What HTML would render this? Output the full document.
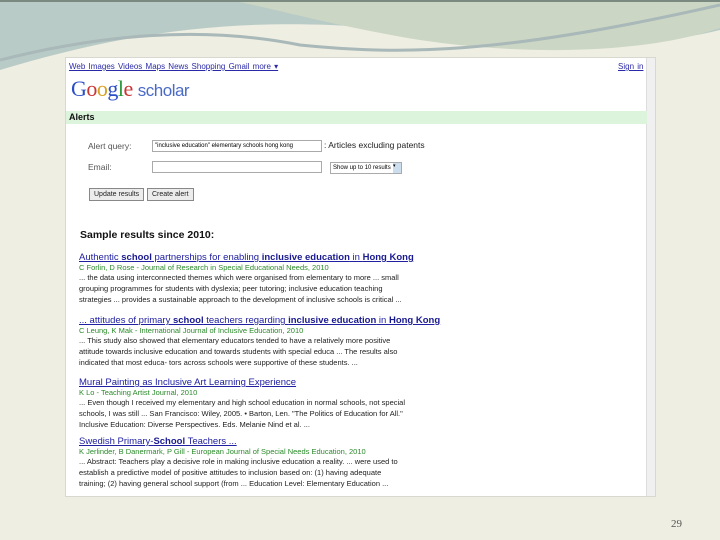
<!DOCTYPE html>
<html><head><meta charset="utf-8"><style>
*{margin:0;padding:0;box-sizing:border-box}
body{width:720px;height:540px;overflow:hidden;background:#eeeee2;font-family:"Liberation Sans",sans-serif;position:relative}
.shot{position:absolute;left:65px;top:57px;width:591px;height:440px;background:#fff;border:1px solid #d8d8d0}
.sb{position:absolute;right:0;top:0;width:9px;height:100%;background:#f0f0f0;border-left:1px solid #ddd}
.a{position:absolute;white-space:nowrap}
.nav{top:4px;left:3px;font-size:8px;color:#2a2aa8;text-decoration:underline;word-spacing:1px}
.t{font-size:9.5px;color:#2020a0;text-decoration:underline}
.t b{color:#1a1a90}
.g{font-size:7.5px;color:#2a8a2a}
.s{font-size:7.5px;color:#222;line-height:11px}
.inp{position:absolute;border:1px solid #aaa;background:#fff;height:12px}
.btn{position:absolute;border:1px solid #888;background:#ececec;font-size:7px;height:13px;padding:2px 4px;color:#222}
</style></head><body>
<svg style="position:absolute;left:0;top:0" width="720" height="70">
<path d="M0 0H720V70H0Z" fill="#eeeee2"/>
<path d="M0 0H720V30C600 60 450 30 330 25 200 20 100 40 0 70Z" fill="#b9cbc6"/>
<path d="M230 0H720V28C640 55 520 55 420 40 330 25 280 10 230 0Z" fill="#ccd6c4"/>
<path d="M0 60C100 35 200 25 300 45 400 55 500 55 720 5" stroke="#a9b8b8" stroke-width="3" fill="none"/>
<path d="M0 0H720V2H0Z" fill="#7a8a80"/>
</svg>
<div class="shot">
<div class="sb"></div>
<div class="a nav">Web Images Videos Maps News Shopping Gmail more ▾</div>
<div class="a nav" style="left:552px">Sign in</div>
<div class="a" style="left:5px;top:18px;font-size:22px;font-family:'Liberation Serif',serif;letter-spacing:-0.5px"><span style="color:#2b4fc8">G</span><span style="color:#c33">o</span><span style="color:#d8a020">o</span><span style="color:#2b4fc8">g</span><span style="color:#2a9a3a">l</span><span style="color:#c33">e</span> <span style="font-family:'Liberation Sans',sans-serif;color:#4a6ac8;font-size:17px">scholar</span></div>
<div class="a" style="left:0;top:53px;width:581px;height:13px;background:#dcf3dc;font-size:9px;font-weight:bold;padding:1px 3px;color:#111">Alerts</div>
<div class="a" style="left:22px;top:83px;font-size:8.5px;color:#555">Alert query:</div>
<div class="inp" style="left:86px;top:82px;width:170px;font-size:6px;padding:2px">"inclusive education" elementary schools hong kong</div>
<div class="a" style="left:258px;top:82px;font-size:8.5px;color:#222">: Articles excluding patents</div>
<div class="a" style="left:22px;top:104px;font-size:8.5px;color:#555">Email:</div>
<div class="inp" style="left:86px;top:103px;width:170px"></div>
<div class="inp" style="left:264px;top:104px;width:72px;font-size:6px;padding:2px">Show up to 10 results<span style="position:absolute;right:0;top:0;width:8px;height:10px;background:#cde;font-size:5px">▾</span></div>
<div class="btn" style="left:23px;top:130px">Update results</div>
<div class="btn" style="left:81px;top:130px">Create alert</div>
<div class="a" style="left:14px;top:171px;font-size:10.5px;font-weight:bold;color:#111">Sample results since 2010:</div>
<div class="a" style="left:13px;top:194px"><div class="t">Authentic <b>school</b> partnerships for enabling <b>inclusive education</b> in <b>Hong Kong</b></div>
<div class="g">C Forlin, D Rose - Journal of Research in Special Educational Needs, 2010</div>
<div class="s">... the data using interconnected themes which were organised from elementary to more ... small<br>grouping programmes for students with dyslexia; peer tutoring; inclusive education teaching<br>strategies ... provides a sustainable approach to the development of inclusive schools is critical ...</div></div>
<div class="a" style="left:13px;top:257px"><div class="t">... attitudes of primary <b>school</b> teachers regarding <b>inclusive education</b> in <b>Hong Kong</b></div>
<div class="g">C Leung, K Mak - International Journal of Inclusive Education, 2010</div>
<div class="s">... This study also showed that elementary educators tended to have a relatively more positive<br>attitude towards inclusive education and towards students with special educa ... The results also<br>indicated that most educa- tors across schools were supportive of these students. ...</div></div>
<div class="a" style="left:13px;top:319px"><div class="t">Mural Painting as Inclusive Art Learning Experience</div>
<div class="g">K Lo - Teaching Artist Journal, 2010</div>
<div class="s">... Even though I received my elementary and high school education in normal schools, not special<br>schools, I was still ... San Francisco: Wiley, 2005. • Barton, Len. "The Politics of Education for All."<br>Inclusive Education: Diverse Perspectives. Eds. Melanie Nind et al. ...</div></div>
<div class="a" style="left:13px;top:378px"><div class="t">Swedish Primary-<b>School</b> Teachers ...</div>
<div class="g">K Jerlinder, B Danermark, P Gill - European Journal of Special Needs Education, 2010</div>
<div class="s">... Abstract: Teachers play a decisive role in making inclusive education a reality. ... were used to<br>establish a predictive model of positive attitudes to inclusion based on: (1) having adequate<br>training; (2) having general school support (from ... Education Level: Elementary Education ...</div></div>
</div>
<div class="a" style="left:671px;top:518px;font-size:11px;color:#555;font-family:'Liberation Serif',serif">29</div>
</body></html>
